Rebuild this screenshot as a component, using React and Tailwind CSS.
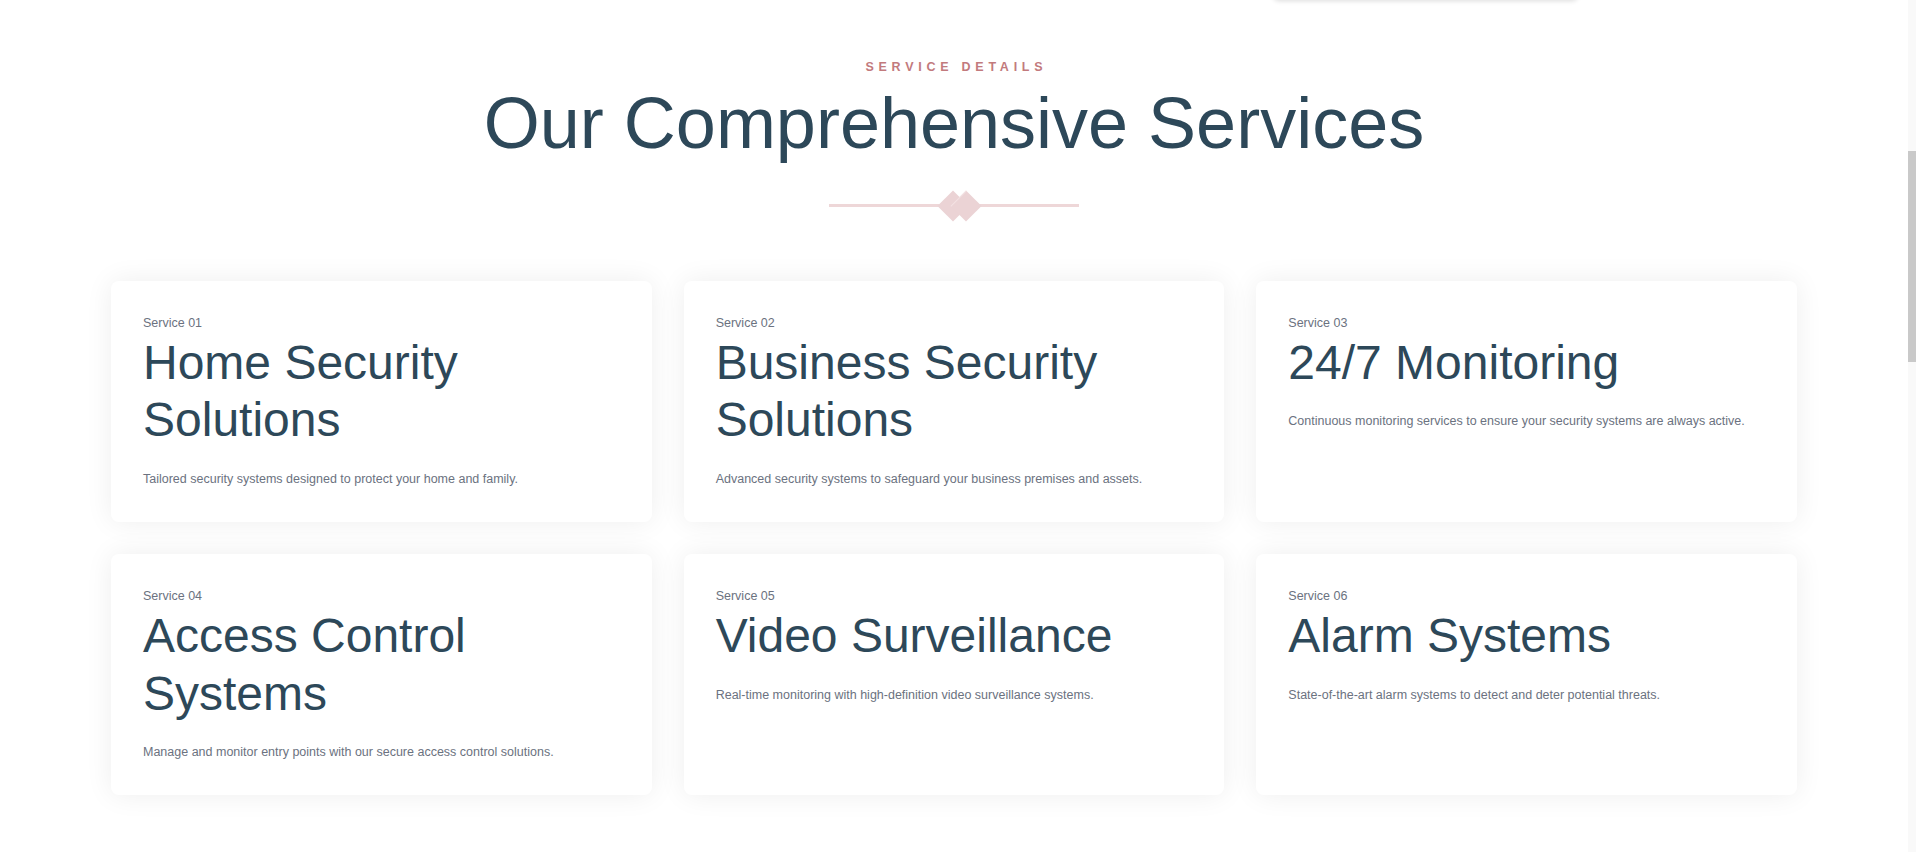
import React from 'react';

const services = [
  { no: '01', title: 'Home Security Solutions', text: 'Tailored security systems designed to protect your home and family.' },
  { no: '02', title: 'Business Security Solutions', text: 'Advanced security systems to safeguard your business premises and assets.' },
  { no: '03', title: '24/7 Monitoring', text: 'Continuous monitoring services to ensure your security systems are always active.' },
  { no: '04', title: 'Access Control Systems', text: 'Manage and monitor entry points with our secure access control solutions.' },
  { no: '05', title: 'Video Surveillance', text: 'Real-time monitoring with high-definition video surveillance systems.' },
  { no: '06', title: 'Alarm Systems', text: 'State-of-the-art alarm systems to detect and deter potential threats.' },
];

function Divider() {
  return (
    <div className="relative w-[250px] h-[32px] mt-[25px]">
      <div className="absolute left-0 right-0 top-[14px] h-[3px] bg-[#eed7d8]" />
      <div className="absolute left-[113px] top-[5px] w-[22px] h-[22px] rotate-45 bg-[#ebd3d5]" />
      <div className="absolute left-[126px] top-[5px] w-[22px] h-[22px] rotate-45 bg-[#ebd3d5] border-l border-[#f3e2e3]" />
    </div>
  );
}

function ServiceCard({ no, title, text }) {
  return (
    <div className="bg-white rounded-lg px-8 pt-8 pb-[33px] shadow-[0_0_28px_rgba(0,0,0,0.07)]">
      <p className="text-[12.5px] leading-[21px] text-[#6b7280]">Service {no}</p>
      <h3 className="text-[48px] leading-[1.2] text-[#2d4859]">{title}</h3>
      <p className="mt-5 text-[12.5px] leading-[1.6] text-[#6b7280]">{text}</p>
    </div>
  );
}

export default function App() {
  return (
    <div className="flex bg-white h-[852px] overflow-hidden" style={{ fontFamily: '"Liberation Sans", Arial, sans-serif' }}>
      <div className="relative flex-1 flex flex-col items-center">
        {/* bottom edge of the sticky header above */}
        <div className="absolute top-[-20px] left-[1273px] w-[305px] h-[20px] bg-white rounded-b-md shadow-[0_1px_5px_rgba(0,0,0,0.14)]" />

        <p className="mt-[57px] text-[12.5px] leading-[20px] font-semibold tracking-[0.38em] pl-[0.38em] uppercase text-[#c27a7d]">
          Service Details
        </p>
        <h2 className="mt-[5px] text-7xl leading-[1.15] text-[#2d4859]">Our Comprehensive Services</h2>
        <Divider />

        <div className="mt-[59px] w-[1686px] grid grid-cols-3 gap-8">
          {services.map(s => <ServiceCard key={s.no} {...s} />)}
        </div>
      </div>

      <div className="w-2 h-full bg-[#f9f9f9] pt-[151px]">
        <div className="h-[211px] bg-[#c9c9c9]" />
      </div>
    </div>
  );
}
